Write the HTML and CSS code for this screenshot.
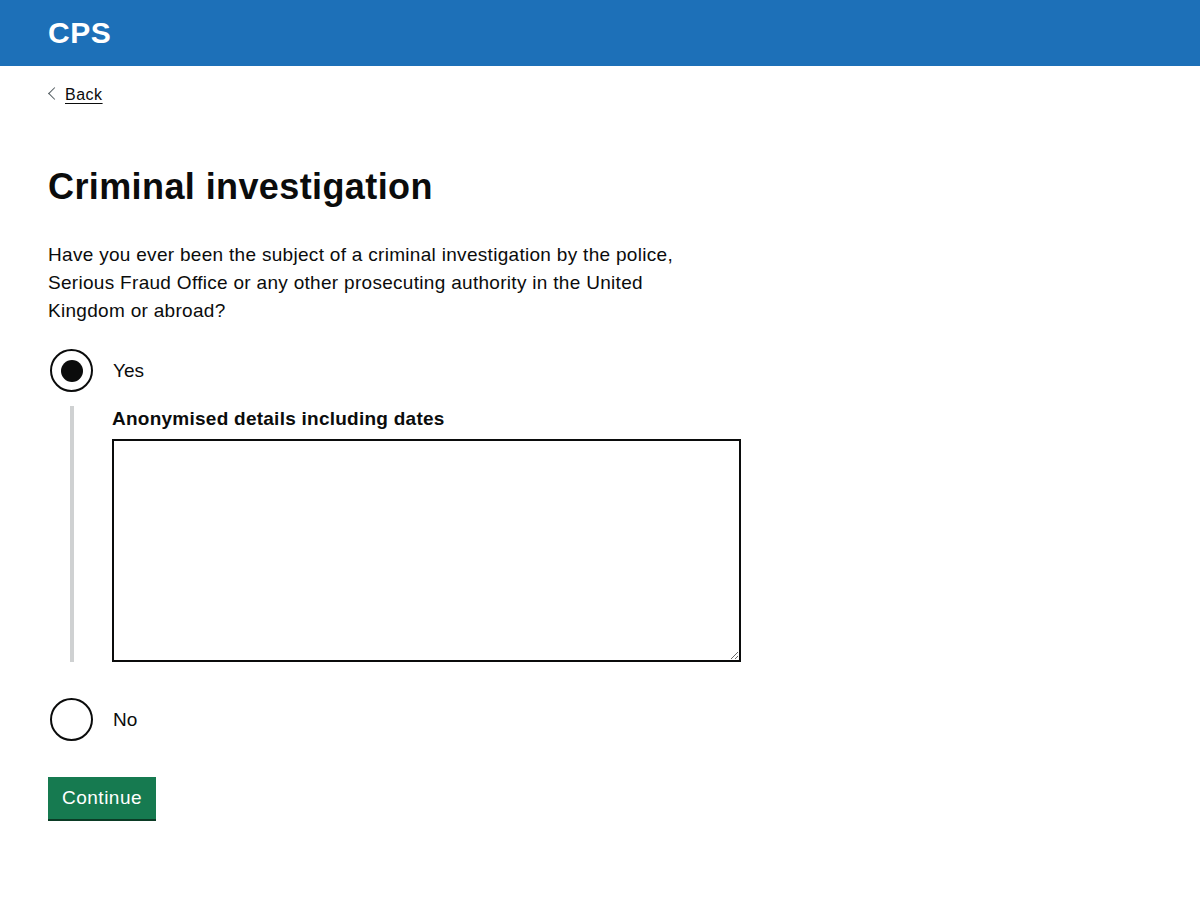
FILE: index.html
```html
<!DOCTYPE html>
<html lang="en">
<head>
  <meta charset="UTF-8">
  <title>Criminal investigation - CPS</title>
  <link rel="stylesheet" href="styles.css">
</head>
<body>
  <header class="site-header">
    <a href="#" class="site-header__name">CPS</a>
  </header>

  <main class="page">
    <a href="#" class="back-link">Back</a>

    <h1 class="heading">Criminal investigation</h1>

    <form class="question">
      <p class="hint">Have you ever been the subject of a criminal investigation by the police, Serious Fraud Office or any other prosecuting authority in the United Kingdom or abroad?</p>

      <!-- Radios -->
      <div class="radios">
        <label class="radio">
          <input type="radio" name="investigation" value="yes" checked>
          <span class="radio__mark"></span>
          <span class="radio__text">Yes</span>
        </label>

        <div class="conditional">
          <label class="conditional__label" for="details">Anonymised details including dates</label>
          <textarea id="details" class="textarea" name="details"></textarea>
        </div>

        <label class="radio radio--last">
          <input type="radio" name="investigation" value="no">
          <span class="radio__mark"></span>
          <span class="radio__text">No</span>
        </label>
      </div>

      <button type="submit" class="button">Continue</button>
    </form>
  </main>
</body>
</html>
```

FILE: styles.css
```css
body {
  margin: 0;
  font-family: "Liberation Sans", Arial, sans-serif;
  color: #0b0c0c;
  background-color: #ffffff;
}

.site-header {
  height: 66px;
  background-color: #1d70b8;
  padding: 0 48px;
  display: flex;
  align-items: center;
}

.site-header__name {
  color: #ffffff;
  font-weight: bold;
  font-size: 30px;
  text-decoration: none;
  letter-spacing: 0.5px;
}

.page {
  padding: 18px 48px 40px;
}

.back-link {
  display: inline-flex;
  align-items: center;
  gap: 6px;
  font-size: 16px;
  line-height: 20px;
  letter-spacing: 0.5px;
  color: #0b0c0c;
  text-decoration: underline;
  text-underline-offset: 3px;
}

.back-link::before {
  content: "";
  width: 8px;
  height: 8px;
  border-left: 1px solid #505a5f;
  border-bottom: 1px solid #505a5f;
  transform: rotate(45deg);
  margin-left: 2px;
  margin-top: -2px;
}

.heading {
  font-size: 36px;
  line-height: 40px;
  font-weight: bold;
  margin: 62px 0 34px;
  letter-spacing: 0.4px;
}

.hint {
  font-size: 19px;
  line-height: 28px;
  max-width: 676px;
  margin: 0 0 24px;
  letter-spacing: 0.3px;
}

.radios {
  display: flex;
  flex-direction: column;
}

.radio {
  display: flex;
  align-items: center;
  height: 44px;
  position: relative;
  cursor: pointer;
}

.radio input {
  position: absolute;
  opacity: 0;
  margin: 0;
}

.radio__mark {
  width: 43px;
  height: 43px;
  margin-left: 2px;
  box-sizing: border-box;
  border: 2px solid #0b0c0c;
  border-radius: 50%;
  display: flex;
  align-items: center;
  justify-content: center;
}

.radio input:checked + .radio__mark::after {
  content: "";
  width: 22px;
  height: 22px;
  border-radius: 50%;
  background-color: #0b0c0c;
}

.radio__text {
  font-size: 19px;
  margin-left: 20px;
}

.conditional {
  margin: 13px 0 36px 22px;
  border-left: 4px solid #cfd1d2;
  padding-left: 38px;
  display: flex;
  flex-direction: column;
}

.conditional__label {
  font-size: 19px;
  line-height: 25px;
  font-weight: bold;
  letter-spacing: 0.25px;
  margin-bottom: 8px;
}

.textarea {
  display: block;
  width: 629px;
  height: 223px;
  box-sizing: border-box;
  border: 2px solid #0b0c0c;
  border-radius: 0;
  font-family: inherit;
  font-size: 19px;
  padding: 5px;
  margin: 0;
}

.radio--last {
  margin-bottom: 35px;
}

.button {
  font-family: inherit;
  font-size: 19px;
  letter-spacing: 0.5px;
  color: #ffffff;
  background-color: #167a50;
  border: none;
  border-radius: 0;
  box-shadow: 0 2px 0 #0b3b25;
  padding: 10px 14px 10px;
  cursor: pointer;
}

.button:hover {
  background-color: #115f3e;
}
```
